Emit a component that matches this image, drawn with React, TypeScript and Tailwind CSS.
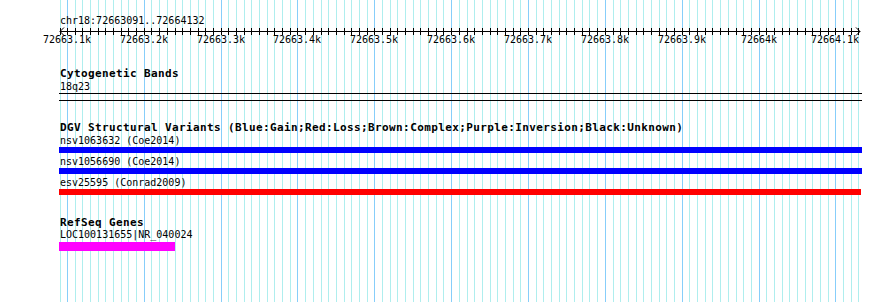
const START = 72663091
const END = 72664132
const X0 = 60
const SCALE = 800 / (END - START)

const xOf = (bp: number) => X0 + (bp - START) * SCALE

const gridLines: { x: number; major: boolean }[] = []
for (let bp = 72663090; bp <= 72664130; bp += 10) {
  gridLines.push({ x: Math.max(60, Math.round(xOf(bp))) + 0.5, major: bp % 100 === 0 })
}

const majors: number[] = []
for (let bp = 72663100; bp <= 72664100; bp += 100) majors.push(bp)

const fmt = (bp: number) => `${parseFloat((bp / 1000).toFixed(1))}k`

const Grid = () => (
  <svg className="absolute inset-0" width={890} height={302}>
    {gridLines.map((g, i) => (
      <line
        key={i}
        x1={g.x}
        x2={g.x}
        y1={0}
        y2={302}
        stroke={g.major ? "#87cefa" : "#afeeee"}
        strokeWidth={1}
      />
    ))}
  </svg>
)

const Ruler = () => (
  <svg width={890} height={20} className="block">
    <line x1={60} x2={860} y1={5.5} y2={5.5} stroke="#000" />
    {gridLines.map((g, i) => (
      <line key={i} x1={g.x} x2={g.x} y1={2} y2={9} stroke="#000" />
    ))}
    <polyline points="64,1.5 60,5.5 64,9.5" fill="none" stroke="#000" />
    <polyline points="856,1.5 860,5.5 856,9.5" fill="none" stroke="#000" />
    {majors.map((bp) => (
      <text
        key={bp}
        x={Math.round(xOf(bp))}
        y={17}
        textAnchor="middle"
        fontFamily="'DejaVu Sans Mono', monospace"
        fontSize={10}
        fill="#000"
      >
        {fmt(bp)}
      </text>
    ))}
  </svg>
)

// bold track titles, ~7px per character
const Title = ({ children, className = "" }: { children: string; className?: string }) => (
  <div className={`ml-[60px] h-[12px] whitespace-nowrap text-[11px] font-bold leading-[9px] tracking-[0.38px] text-black ${className}`}>
    {children}
  </div>
)

const Label = ({ children, className = "" }: { children: string; className?: string }) => (
  <div className={`ml-[60px] h-[11px] whitespace-nowrap text-[10px] leading-[10px] text-black ${className}`}>
    {children}
  </div>
)

const variants = [
  { name: "nsv1063632 (Coe2014)", color: "bg-[#0000ff]", width: "w-[803px]" },
  { name: "nsv1056690 (Coe2014)", color: "bg-[#0000ff]", width: "w-[803px]" },
  { name: "esv25595 (Conrad2009)", color: "bg-[#ff0000]", width: "w-[802px]" },
]

export default function App() {
  return (
    <div className="relative h-[302px] w-[890px] overflow-hidden bg-white font-['DejaVu_Sans_Mono',monospace]">
      <Grid />
      <div className="relative flex flex-col pt-[16px]">
        <div className="ml-[60px] h-[10px] whitespace-nowrap text-[10px] leading-[10px]">chr18:72663091..72664132</div>
        <Ruler />

        <Title className="mt-[23px]">Cytogenetic Bands</Title>
        <div className="ml-[60px] h-[10px] text-[10px] leading-[11px]">18q23</div>
        <div className="ml-[59px] mt-[2px] h-px w-[803px] bg-black" />
        <div className="ml-[59px] mt-[6px] h-px w-[803px] bg-black" />

        <Title className="mt-[22px]">DGV Structural Variants (Blue:Gain;Red:Loss;Brown:Complex;Purple:Inversion;Black:Unknown)</Title>
        <div className="mt-[1px] flex flex-col gap-[4px]">
          {variants.map((v) => (
            <div key={v.name} className="flex flex-col">
              <Label>{v.name}</Label>
              <div className={`ml-[59px] h-[6px] ${v.width} ${v.color}`} />
            </div>
          ))}
        </div>

        <Title className="mt-[23px]">RefSeq Genes</Title>
        <div className="ml-[60px] mt-[1px] h-[9px] whitespace-nowrap text-[10px] leading-[8px]">LOC100131655|NR_040024</div>
        <div className="ml-[59px] mt-[2px] h-[9px] w-[116px] bg-[#ff00ff]" />
      </div>
    </div>
  )
}
